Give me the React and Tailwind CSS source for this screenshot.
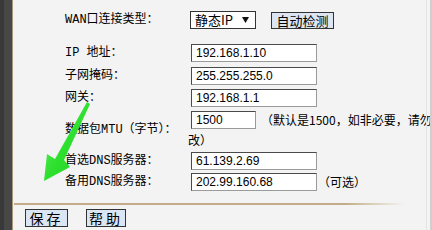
import React from 'react';

const cjk = { fontFamily: '"Noto Sans CJK SC", "Liberation Sans", sans-serif' };
const label = { fontFamily: '"Liberation Mono", "Noto Sans CJK SC", monospace' };
const arial = { fontFamily: '"Liberation Sans", Arial, sans-serif' };

const Field = ({ value, w = 'w-[126px]' }) => (
  <div
    className={`${w} h-[18px] shrink-0 border border-[#4a4a4a] border-b-[#9a9a9a] border-r-[#9a9a9a] bg-white pl-[4px] text-[12px] leading-[16px] text-black`}
    style={arial}
  >
    {value}
  </div>
);

const Row = ({ name, className = '', children }) => (
  <div className={`flex items-center ${className}`}>
    <div className="w-[126px] shrink-0 text-[12px] leading-[18px] text-black whitespace-nowrap" style={label}>
      {name}
    </div>
    {children}
  </div>
);

const Arrow = () => (
  <svg className="absolute left-0 top-0 pointer-events-none" width="432" height="230">
    <defs>
      <linearGradient id="g" x1="0" y1="0" x2="1" y2="1">
        <stop offset="0" stopColor="#7af07a" />
        <stop offset="0.5" stopColor="#2fe02f" />
        <stop offset="1" stopColor="#1fcf2a" />
      </linearGradient>
    </defs>
    <polygon points="87,102 90,104 64,160 70,167 44,181 47,154 55,159" fill="url(#g)" />
  </svg>
);

export default function App() {
  return (
    <div className="relative w-[432px] h-[230px] flex bg-[#f3f3f3] overflow-hidden">
      <div className="w-[4px] bg-[#393939]" />
      <div className="w-[8px] bg-[#474747]" />
      <div className="w-px bg-[#a8977a]" />
      <div className="w-px bg-[#fbf0dc]" />

      <div className="flex-1 flex flex-col min-w-0">
        <div className="h-[203px] pl-[51px] pt-[11px]">
          <Row name="WAN口连接类型：">
            <div className="ml-[-1px] w-[66px] h-[18px] border border-[#333] bg-white flex items-center justify-between pl-[4px] pr-[6px]">
              <span className="text-[13px] leading-[16px] text-black" style={cjk}>静态IP</span>
              <svg width="7" height="6" viewBox="0 0 7 6"><polygon points="0,0 7,0 3.5,6" fill="#111" /></svg>
            </div>
            <div
              className="ml-[15px] w-[63px] h-[17px] border border-[#333] bg-[#dce6f3] flex items-center justify-center text-[13px] leading-[15px] text-black"
              style={cjk}
            >
              自动检测
            </div>
          </Row>

          <Row name="IP 地址：" className="mt-[15px]">
            <Field value="192.168.1.10" />
          </Row>
          <Row name="子网掩码：" className="mt-[5px]">
            <Field value="255.255.255.0" />
          </Row>
          <Row name="网关：" className="mt-[4px]">
            <Field value="192.168.1.1" />
          </Row>

          <Row name="数据包MTU（字节）：" className="mt-[4px]">
            <div className="flex flex-col min-w-0">
              <div className="flex items-center whitespace-nowrap">
                <Field value="1500" w="w-[65px]" />
                <span className="ml-[5px] text-[12px] leading-[18px] text-black" style={cjk}>
                  （默认是1500，如非必要，请勿
                </span>
              </div>
              <div className="mt-[2px] ml-[-3px] text-[12px] leading-[18px] text-black" style={cjk}>
                改）
              </div>
            </div>
          </Row>

          <Row name="首选DNS服务器：" className="mt-[3px]">
            <Field value="61.139.2.69" />
          </Row>
          <Row name="备用DNS服务器：" className="mt-[3px]">
            <Field value="202.99.160.68" />
            <span className="ml-[1px] text-[12px] leading-[18px] text-black whitespace-nowrap" style={cjk}>
              （可选）
            </span>
          </Row>
        </div>

        <div className="h-[2px] w-[390px] bg-linear-to-r from-[#c3ad88] from-85% to-transparent" />

        <div className="flex items-center gap-[18px] pl-[11px] pt-[4px]">
          <div
            className="w-[43px] h-[18px] border border-[#333] bg-[#dbe6f4] flex items-center justify-center text-[14px] leading-[16px] tracking-[3px] text-black"
            style={cjk}
          >
            保存
          </div>
          <div
            className="w-[40px] h-[18px] border border-[#333] bg-[#dbe6f4] flex items-center justify-center text-[14px] leading-[16px] tracking-[3px] text-black"
            style={cjk}
          >
            帮助
          </div>
        </div>
      </div>

      <div className="absolute top-0 bottom-0 left-[426px] w-px bg-[#e4e4e4]" />
      <div className="absolute top-0 bottom-0 left-[430px] w-[2px] bg-[#cfcfcf]" />
      <Arrow />
    </div>
  );
}
